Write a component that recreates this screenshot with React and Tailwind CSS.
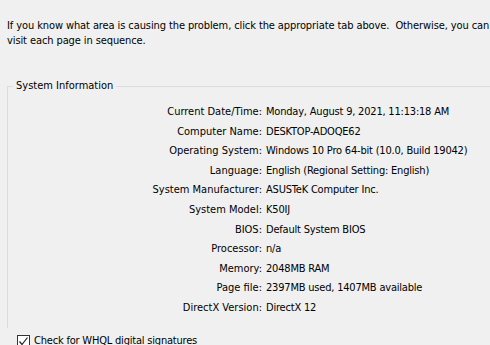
import React from "react";

const rows = [
  ["Current Date/Time:", "Monday, August 9, 2021, 11:13:18 AM"],
  ["Computer Name:", "DESKTOP-ADOQE62"],
  ["Operating System:", "Windows 10 Pro 64-bit (10.0, Build 19042)"],
  ["Language:", "English (Regional Setting: English)"],
  ["System Manufacturer:", "ASUSTeK Computer Inc."],
  ["System Model:", "K50IJ"],
  ["BIOS:", "Default System BIOS"],
  ["Processor:", "n/a"],
  ["Memory:", "2048MB RAM"],
  ["Page file:", "2397MB used, 1407MB available"],
  ["DirectX Version:", "DirectX 12"],
];

export default function App() {
  return (
    <div
      className="w-[490px] h-[345px] overflow-hidden bg-[#f0f0f0] text-[#000] text-[11px]"
      style={{ fontFamily: '"DejaVu Sans Condensed", "DejaVu Sans", sans-serif' }}
    >
      <div className="pt-[18px] pl-[7px] leading-[15px] whitespace-pre tracking-[-0.1px]">
        <div>If you know what area is causing the problem, click the appropriate tab above.  Otherwise, you can use the buttons below to</div>
        <div>visit each page in sequence.</div>
      </div>
      <fieldset className="ml-[7px] mt-[31px] w-[520px] h-[249px] border border-b-0 border-[#dcdcdc] px-0">
        <legend className="ml-[5px] px-[3px] leading-[14px]">System Information</legend>
        <div className="grid grid-cols-[254px_1fr] gap-x-[4px] mt-[9px]">
          {rows.map(([k, v]) => (
            <React.Fragment key={k}>
              <div className="text-right h-[19.6px] leading-[19.6px] whitespace-nowrap">{k}</div>
              <div className="h-[19.6px] leading-[19.6px] whitespace-nowrap tracking-[-0.2px]">{v}</div>
            </React.Fragment>
          ))}
        </div>
      </fieldset>
      <div className="flex items-center ml-[17px] mt-[6px] gap-[4px]">
        <div className="w-[13px] h-[13px] border border-[#333] bg-white flex items-center justify-center">
          <svg width="11" height="11" viewBox="0 0 11 11">
            <path d="M1.5 5.5 L4 8.5 L9.5 1.5" fill="none" stroke="#222" strokeWidth="1.2" />
          </svg>
        </div>
        <span className="leading-[14px] tracking-[-0.2px]">Check for WHQL digital signatures</span>
      </div>
    </div>
  );
}
